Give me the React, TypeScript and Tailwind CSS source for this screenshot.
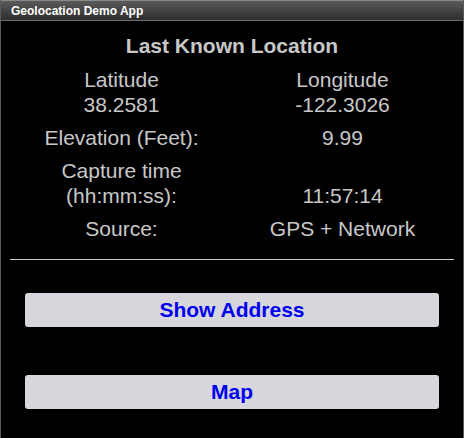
export default function App() {
  const font = { fontFamily: '"Liberation Sans", Arial, sans-serif' };

  return (
    <div
      className="w-[464px] h-[438px] bg-black border-x border-[#5a5a5a] box-border flex flex-col text-[#c8c8c8]"
      style={font}
    >
      {/* Title bar */}
      <div className="h-[21px] shrink-0 border-t border-[#8a8a8a] border-b border-b-[#6a6a6a] bg-gradient-to-b from-[#5a5a5a] to-[#2e2e2e] flex items-center pl-[10px]">
        <span className="text-[12px] font-bold text-white leading-none">Geolocation Demo App</span>
      </div>

      <div className="px-[10px] flex flex-col">
        <h1 className="mt-[13px] text-center text-[21px] leading-[24px] font-bold">Last Known Location</h1>

        <div className="mt-[9px] grid grid-cols-2 text-center text-[21px] leading-[25px]">
          <div>
            <div>Latitude</div>
            <div>38.2581</div>
          </div>
          <div>
            <div>Longitude</div>
            <div>-122.3026</div>
          </div>
        </div>

        <div className="mt-2 grid grid-cols-2 text-center text-[21px] leading-[25px]">
          <div>Elevation (Feet):</div>
          <div>9.99</div>
        </div>

        <div className="mt-2 grid grid-cols-2 text-center text-[21px] leading-[25px]">
          <div>
            <div>Capture time</div>
            <div>(hh:mm:ss):</div>
          </div>
          <div className="flex items-end justify-center">11:57:14</div>
        </div>

        <div className="mt-2 grid grid-cols-2 text-center text-[21px] leading-[25px]">
          <div>Source:</div>
          <div>GPS + Network</div>
        </div>

        <div className="mt-[18px] -mx-px h-px bg-[#c8c8c8]" />

        <button className="mt-[33px] mx-[14px] h-[34px] rounded-[3px] bg-[#d6d6dc] text-[#0000ee] text-[21px] font-bold leading-[24px]">
          Show Address
        </button>

        <button className="mt-[48px] mx-[14px] h-[34px] rounded-[3px] bg-[#d6d6dc] text-[#0000ee] text-[21px] font-bold leading-[24px]">
          Map
        </button>
      </div>
    </div>
  );
}
